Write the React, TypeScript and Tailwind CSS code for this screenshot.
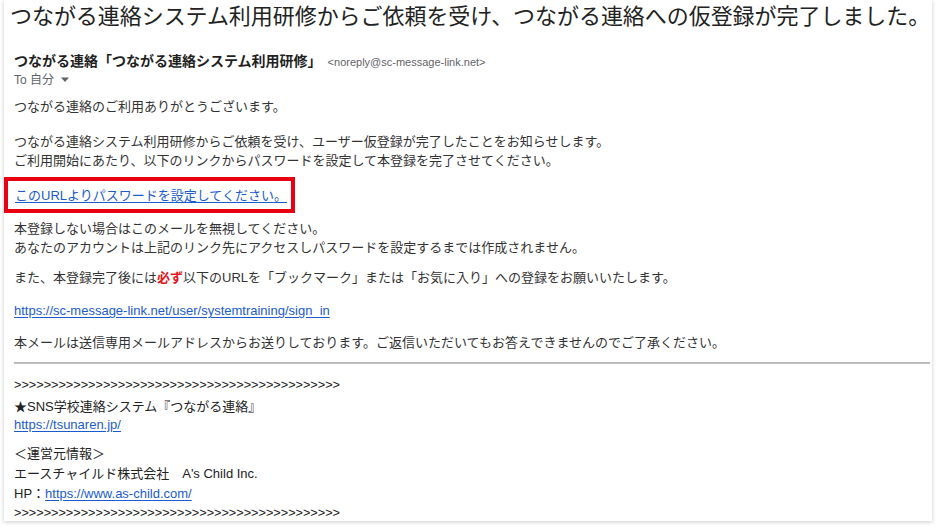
import React from 'react';

const FONT = "font-['Liberation_Sans','Noto_Sans_CJK_JP',sans-serif]";
const LINK = 'text-[#1a5bd0] underline underline-offset-2';
const ARROWS = '>'.repeat(44);

export default function App() {
  return (
    <div className={`${FONT} w-[937px] h-[532px] bg-white text-[#222]`}>
      <div className="ml-[4px] w-[928px] h-[521px] bg-white shadow-[0_1px_4px_rgba(0,0,0,0.22)] pt-[2px] pl-[6px]">
        <h1 className="text-[22px] leading-[30px] tracking-[-0.05px] whitespace-nowrap">
          つながる連絡システム利用研修からご依頼を受け、つながる連絡への仮登録が完了しました。
        </h1>

        <div className="pl-[4px] pr-[2px]">
          <div className="mt-[20px] leading-[18px] flex items-baseline gap-[6px]">
            <span className="text-[14px] font-bold text-[#1f1f1f]">つながる連絡「つながる連絡システム利用研修」</span>
            <span className="text-[11px] text-[#5f6368]">&lt;noreply@sc-message-link.net&gt;</span>
          </div>
          <div className="leading-[18px] text-[12px] text-[#5f6368] flex items-center gap-[4px]">
            <span>To 自分</span>
            <svg width="10" height="6" viewBox="0 0 10 6" className="ml-[2px]">
              <path d="M1 0.5h8L5 5z" fill="#5f6368" />
            </svg>
          </div>

          <div className="text-[13px] leading-[19px] text-[#333]">
            <p className="mt-[8px]">つながる連絡のご利用ありがとうございます。</p>
            <p className="mt-[16px]">
              つながる連絡システム利用研修からご依頼を受け、ユーザー仮登録が完了したことをお知らせします。
              <br />
              ご利用開始にあたり、以下のリンクからパスワードを設定して本登録を完了させてください。
            </p>

            <div className="-ml-[10px] mt-[7px] w-[291px] h-[36px] border-[4px] border-[#e60012] flex items-center pl-[7px]">
              <a className={LINK}>このURLよりパスワードを設定してください。</a>
            </div>

            <p className="mt-[6px]">
              本登録しない場合はこのメールを無視してください。
              <br />
              あなたのアカウントは上記のリンク先にアクセスしパスワードを設定するまでは作成されません。
            </p>
            <p className="mt-[11px]">
              また、本登録完了後には<span className="font-bold text-[#e3171b]">必ず</span>以下のURLを「ブックマーク」または「お気に入り」への登録をお願いいたします。
            </p>
            <p className="mt-[14px]">
              <a className={LINK}>https://sc-message-link.net/user/systemtraining/sign_in</a>
            </p>
            <p className="mt-[13px]">
              本メールは送信専用メールアドレスからお送りしております。ご返信いただいてもお答えできませんのでご了承ください。
            </p>

            <hr className="mt-[10px] border-0 h-[2px] bg-[#bdbdbd]" />

            <div className="mt-[12px] leading-[18px] text-[#222]">
              <p className="text-[12.7px]">{ARROWS}</p>
              <p className="mt-[4px]">★SNS学校連絡システム『つながる連絡』</p>
              <p>
                <a className={LINK}>https://tsunaren.jp/</a>
              </p>
              <div className="mt-[10px] leading-[20px]">
                <p>＜運営元情報＞</p>
                <p>エースチャイルド株式会社　A's Child Inc.</p>
                <p>
                  HP：<a className={LINK}>https://www.as-child.com/</a>
                </p>
              </div>
              <p className="text-[12.7px]">{ARROWS}</p>
            </div>
          </div>
        </div>
      </div>
    </div>
  );
}
